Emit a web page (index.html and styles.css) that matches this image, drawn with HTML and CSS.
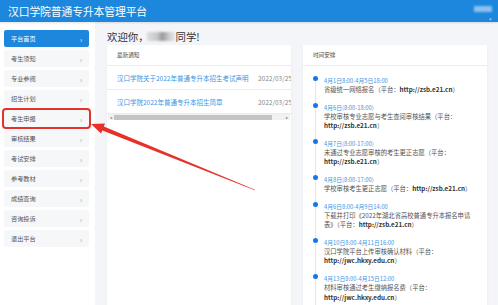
FILE: index.html
```html
<!DOCTYPE html>
<html lang="zh">
<head>
  <meta charset="UTF-8" />
  <meta name="viewport" content="width=device-width, initial-scale=1.0" />
  <title>汉口学院普通专升本管理平台</title>
  <link rel="stylesheet" href="styles.css">
</head>
<body>
  <header class="topbar">
    <div class="brand">汉口学院普通专升本管理平台</div>
    <div class="user">
      <span class="user-name"></span>
      <span class="user-caret">▾</span>
    </div>
  </header>

  <div class="layout">
    <!-- 侧边菜单 -->
    <nav class="sidebar">
      <a class="nav-item active">平台首页<span class="chev">›</span></a>
      <a class="nav-item">考生须知<span class="chev">›</span></a>
      <a class="nav-item">专业参阅<span class="chev">›</span></a>
      <a class="nav-item">招生计划<span class="chev">›</span></a>
      <a class="nav-item marked">考生申报<span class="chev">›</span></a>
      <a class="nav-item">审核结果<span class="chev">›</span></a>
      <a class="nav-item">考试安排<span class="chev">›</span></a>
      <a class="nav-item">参考教材<span class="chev">›</span></a>
      <a class="nav-item">成绩查询<span class="chev">›</span></a>
      <a class="nav-item">咨询投诉<span class="chev">›</span></a>
      <a class="nav-item">退出平台<span class="chev">›</span></a>
    </nav>

    <main class="content">
      <div class="welcome">欢迎你，<span class="blur-name"></span>同学!</div>

      <div class="cards">
        <!-- 最新通知 -->
        <div class="card">
          <div class="card-title">最新通知</div>
          <div class="notice-scroll">
            <div class="notice-row">
              <a class="notice-link">汉口学院关于2022年普通专升本招生考试声明</a>
              <span class="notice-date">2022/03/25</span>
            </div>
            <div class="notice-row">
              <a class="notice-link">汉口学院2022年普通专升本招生简章</a>
              <span class="notice-date">2022/03/25</span>
            </div>
          </div>
          <div class="fake-scrollbar">
            <span class="sb-arrow">◂</span>
            <span class="sb-thumb"></span>
            <span class="sb-arrow">▸</span>
          </div>
        </div>

        <!-- 时间安排 -->
        <div class="card">
          <div class="card-title">时间安排</div>
          <ul class="timeline">
            <li>
              <div class="tl-date">4月1日8:00-4月5日18:00</div>
              <div class="tl-text">省级统一网络报名（平台：<b>http://zsb.e21.cn</b>）</div>
            </li>
            <li>
              <div class="tl-date">4月6日(8:00-18:00)</div>
              <div class="tl-text">学校审核专业志愿与考生查阅审核结果（平台：<br><b>http://zsb.e21.cn</b>）</div>
            </li>
            <li>
              <div class="tl-date">4月7日(8:00-17:00)</div>
              <div class="tl-text">未通过专业志愿审核的考生更正志愿（平台：<br><b>http://zsb.e21.cn</b>）</div>
            </li>
            <li>
              <div class="tl-date">4月8日(8:00-17:00)</div>
              <div class="tl-text">学校审核考生更正志愿（平台：<b>http://zsb.e21.cn</b>）</div>
            </li>
            <li>
              <div class="tl-date">4月6日8:00-4月9日14:00</div>
              <div class="tl-text">下载并打印《2022年湖北省高校普通专升本报名申请<br>表》（平台：<b>http://zsb.e21.cn</b>）</div>
            </li>
            <li>
              <div class="tl-date">4月10日8:00-4月11日16:00</div>
              <div class="tl-text">汉口学院平台上传审核确认材料（平台：<br><b>http://jwc.hkxy.edu.cn</b>）</div>
            </li>
            <li>
              <div class="tl-date">4月13日8:00-4月15日12:00</div>
              <div class="tl-text">材料审核通过考生缴纳报名费（平台：<br><b>http://jwc.hkxy.edu.cn</b>）</div>
            </li>
          </ul>
        </div>
      </div>
    </main>
  </div>

  <!-- 标注箭头 -->
  <svg class="annotation" width="498" height="305" viewBox="0 0 498 305">
    <polygon fill="#e8302a" points="91,124 105,123.6 103.8,126.6 255,189.7 254.8,190.3 102.4,130.4 101,133.4" />
  </svg>
</body>
</html>
```

FILE: styles.css
```css
:root {
  --primary: #1c87dd;
  --link: #3b97e3;
  --background: #f4f5f8;
  --text: #333;
  --muted: #666;
  --border: #ececec;
}

body {
  margin: 0;
  font-family: "Noto Sans CJK SC", "Noto Sans", sans-serif;
  color: var(--text);
  background: var(--background);
  height: 305px;
  overflow: hidden;
}

.topbar {
  height: 22px;
  background: var(--primary);
  display: flex;
  align-items: center;
  justify-content: space-between;
  padding: 0 6px 0 8px;
  box-shadow: 0 1px 2px rgba(0,0,0,0.12);
  position: relative;
  z-index: 1;
}

.brand {
  color: #fff;
  font-size: 10.8px;
  letter-spacing: -0.1px;
}

.user {
  display: flex;
  flex-direction: column;
  align-items: flex-end;
  height: 22px;
}

.user-name {
  display: block;
  width: 18px;
  height: 6px;
  margin-top: 6px;
  background: #8cc0ee;
  filter: blur(1px);
}

.user-caret {
  color: #9dc9ef;
  font-size: 5px;
  line-height: 5px;
  margin-top: 4px;
}

.layout {
  display: flex;
  height: 283px;
}

.sidebar {
  width: 85px;
  padding: 8px 6px 0 4px;
  background: #fff;
  display: flex;
  flex-direction: column;
  gap: 3px;
}

.nav-item {
  height: 17px;
  display: flex;
  align-items: center;
  justify-content: space-between;
  padding: 0 7px 0 7px;
  background: #f6f7f9;
  border-radius: 2px;
  font-size: 6.2px;
  color: #555;
}

.nav-item .chev {
  color: #999;
  font-size: 7px;
}

.nav-item.active {
  background: var(--primary);
  color: #fff;
}

.nav-item.active .chev {
  color: #fff;
}

.nav-item.marked {
  outline: 2px solid #e8302a;
  outline-offset: 0;
}

.content {
  flex: 1;
  padding: 6px 11px 0 12px;
  display: flex;
  flex-direction: column;
  min-width: 0;
}

.welcome {
  font-size: 10.4px;
  height: 22px;
  line-height: 17px;
  display: flex;
  align-items: center;
}

.blur-name {
  display: inline-block;
  width: 28px;
  height: 9px;
  margin: 0 1px 0 -2px;
  background: linear-gradient(90deg, #ddd 0%, #c9c9c9 35%, #9a9a9a 55%, #cfcfcf 80%, #e6e6e6 100%);
  filter: blur(1px);
}

.cards {
  flex: 1;
  display: flex;
  gap: 12px;
}

.card {
  flex: 1;
  min-width: 0;
  background: #fff;
  box-shadow: 0 1px 3px rgba(0,0,0,0.05);
  overflow: hidden;
}

.card-title {
  height: 20px;
  line-height: 21px;
  padding-left: 10px;
  font-size: 5.6px;
  color: #444;
  border-bottom: 1px solid var(--border);
}

.notice-scroll {
  overflow: hidden;
}

.notice-row {
  height: 23px;
  display: flex;
  align-items: center;
  padding-left: 10px;
  border-bottom: 1px solid var(--border);
  white-space: nowrap;
  font-size: 6.5px;
}

.notice-link {
  color: var(--link);
  width: 141px;
  flex-shrink: 0;
}

.notice-date {
  color: #888;
}

.fake-scrollbar {
  height: 6px;
  margin: 0 1px;
  background: #f1f1f1;
  display: flex;
  align-items: center;
}

.sb-arrow {
  font-size: 4px;
  color: #777;
  width: 6px;
  text-align: center;
}

.sb-thumb {
  height: 5px;
  width: 158px;
  background: #c4c4c4;
  margin-right: auto;
}

.timeline {
  list-style: none;
  margin: 0;
  padding: 10px 0 0 21px;
}

.timeline li {
  position: relative;
  padding-bottom: 8px;
}

.timeline li::before {
  content: "";
  position: absolute;
  left: -11px;
  top: 0;
  width: 5px;
  height: 5px;
  border-radius: 50%;
  background: #1677e6;
}

.timeline li::after {
  content: "";
  position: absolute;
  left: -9px;
  top: 5px;
  bottom: -1px;
  width: 1px;
  background: #e4e6ea;
}

.tl-date {
  font-size: 5.8px;
  line-height: 9px;
  color: var(--link);
}

.tl-text {
  font-size: 6.3px;
  line-height: 9.6px;
  color: #555;
  white-space: nowrap;
}

.tl-text b {
  color: #333;
}

.annotation {
  position: absolute;
  left: 0;
  top: 0;
  pointer-events: none;
}
```
